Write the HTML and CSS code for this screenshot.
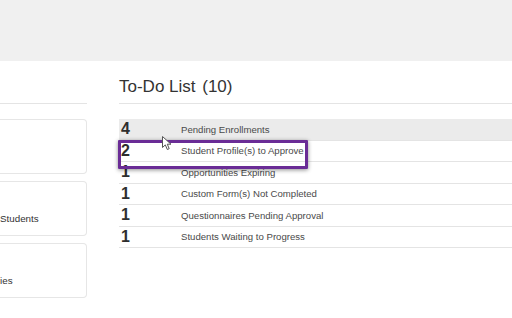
FILE: index.html
```html
<!DOCTYPE html>
<html lang="en">
  <head>
    <title>Dashboard - To-Do List</title>
    <meta charset="utf-8">
    <meta name="viewport" content="width=device-width, initial-scale=1.0">
    <link rel="stylesheet" href="styles.css">
  </head>
  <body>
    <div class="topbar"></div>

    <div class="dashboard">
      <!-- Quick links column (mostly scrolled out of view) -->
      <div class="side">
        <div class="section-head"></div>
        <div class="card"></div>
        <div class="card card-students">
          <span class="card-label">Students</span>
        </div>
        <div class="card card-opps">
          <span class="card-label">ies</span>
        </div>
      </div>

      <!-- To-Do list -->
      <div class="todo">
        <div class="section-head">
          <h2>To-Do List <span class="count">(10)</span></h2>
        </div>

        <div class="todo-table">
          <div class="todo-row highlight">
            <span class="todo-num">4</span>
            <span class="todo-label">Pending Enrollments</span>
          </div>
          <div class="todo-row">
            <span class="todo-num">2</span>
            <span class="todo-label">Student Profile(s) to Approve</span>
          </div>
          <div class="todo-row">
            <span class="todo-num">1</span>
            <span class="todo-label">Opportunities Expiring</span>
          </div>
          <div class="todo-row">
            <span class="todo-num">1</span>
            <span class="todo-label">Custom Form(s) Not Completed</span>
          </div>
          <div class="todo-row">
            <span class="todo-num">1</span>
            <span class="todo-label">Questionnaires Pending Approval</span>
          </div>
          <div class="todo-row">
            <span class="todo-num">1</span>
            <span class="todo-label">Students Waiting to Progress</span>
          </div>

          <!-- Annotation box + mouse pointer -->
          <div class="callout"></div>
          <svg class="pointer" width="11" height="15" viewBox="0 0 11 15">
            <path d="M0.5 0.5 L0.5 11.5 L3.3 8.9 L5.3 13.5 L7.2 12.7 L5.3 8.2 L9 8.2 Z" fill="#fff" stroke="#555" stroke-width="1" stroke-linejoin="round"/>
          </svg>
        </div>
      </div>
    </div>
  </body>
</html>
```

FILE: styles.css
```css
* {
  margin: 0;
  padding: 0;
  box-sizing: border-box;
}

:root {
  --header-bg: #f0f0f0;
  --line: #e4e4e4;
  --text-dark: #333333;
  --text-label: #4a4a4a;
  --accent-purple: #6a2c96;
}

body {
  font-family: "Liberation Sans", Arial, Helvetica, sans-serif;
  background: #ffffff;
  color: var(--text-dark);
  overflow: hidden;
  width: 512px;
  height: 318px;
}

.topbar {
  height: 61px;
  background: var(--header-bg);
}

.dashboard {
  display: flex;
  gap: 32px;
  padding-top: 16px;
}

/* Left column */
.side {
  flex: 0 0 87px;
}

.section-head {
  height: 27px;
  border-bottom: 1px solid var(--line);
  margin-bottom: 15px;
}

.section-head h2 {
  font-size: 17px;
  font-weight: normal;
  line-height: 20px;
  color: var(--text-dark);
}

.section-head .count {
  margin-left: 2px;
}

.card {
  height: 55px;
  border: 1px solid #e6e6e6;
  border-left: none;
  border-radius: 0 4px 4px 0;
  margin-bottom: 7px;
  padding-top: 31px;
}

.card-label {
  display: block;
  font-size: 9.8px;
  line-height: 12px;
  color: var(--text-dark);
  white-space: nowrap;
}

/* To-Do list */
.todo {
  flex: 1;
}

.todo-table {
  position: relative;
}

.todo-row {
  display: flex;
  align-items: center;
  height: 21.5px;
  border-bottom: 1px solid var(--line);
}

.todo-row.highlight {
  background: #ebebeb;
}

.todo-num {
  flex: 0 0 62px;
  padding-left: 2px;
  font-size: 16px;
  font-weight: bold;
  color: #2e2e2e;
  line-height: 20px;
}

.todo-label {
  font-size: 9.6px;
  color: var(--text-label);
}

.callout {
  position: absolute;
  left: -1px;
  top: 21px;
  width: 190px;
  height: 29px;
  border: 3px solid var(--accent-purple);
  border-radius: 1px;
  box-shadow: 0 1px 4px rgba(0, 0, 0, 0.45);
}

.pointer {
  position: absolute;
  left: 43px;
  top: 17px;
}
```
